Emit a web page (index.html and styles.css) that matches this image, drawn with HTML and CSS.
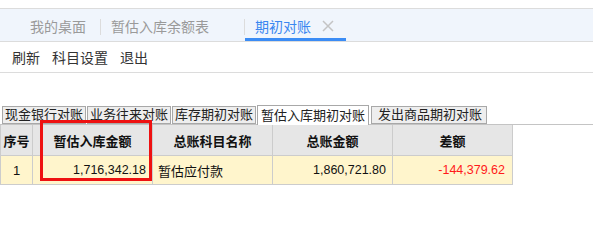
FILE: index.html
```html
<!DOCTYPE html>
<html lang="zh-CN">
<head>
<meta charset="utf-8">
<title>期初对账</title>
<link rel="stylesheet" href="styles.css">
</head>
<body>
<div class="top-space"></div>
<div class="tabbar">
  <div class="tab tab-home">我的桌面</div>
  <span class="sep"></span>
  <div class="tab">暂估入库余额表<svg class="close hidden" width="12" height="12" viewBox="0 0 12 12"><path d="M1 1L11 11M11 1L1 11"/></svg></div>
  <span class="sep"></span>
  <div class="tab active">期初对账<svg class="close" width="12" height="12" viewBox="0 0 12 12"><path d="M1 1L11 11M11 1L1 11"/></svg></div>
</div>
<div class="toolbar">
  <span class="tool">刷新</span>
  <span class="tool">科目设置</span>
  <span class="tool">退出</span>
</div>
<div class="subtabs">
  <div class="stab">现金银行对账</div>
  <div class="stab">业务往来对账</div>
  <div class="stab">库存期初对账</div>
  <div class="stab stab-active">暂估入库期初对账</div>
  <div class="stab stab-last">发出商品期初对账</div>
</div>
<div class="grid-wrap">
  <table class="grid">
    <colgroup>
      <col class="c-no">
      <col class="c-w">
      <col class="c-w">
      <col class="c-w">
      <col class="c-w">
    </colgroup>
    <thead>
      <tr>
        <th>序号</th>
        <th>暂估入库金额</th>
        <th>总账科目名称</th>
        <th>总账金额</th>
        <th>差额</th>
      </tr>
    </thead>
    <tbody>
      <tr>
        <td class="center">1</td>
        <td class="num">1,716,342.18</td>
        <td class="text">暂估应付款</td>
        <td class="num">1,860,721.80</td>
        <td class="num neg">-144,379.62</td>
      </tr>
    </tbody>
  </table>
  <div class="highlight"></div>
</div>
</body>
</html>
```

FILE: styles.css
```css
html, body {
  margin: 0;
  padding: 0;
  background: #ffffff;
}
body {
  font-family: "Liberation Sans", "Noto Sans CJK SC", sans-serif;
  color: #222;
}
.top-space {
  height: 8px;
}
.tabbar {
  display: flex;
  align-items: stretch;
  height: 32px;
  border-top: 1px solid #dcdcdc;
  border-bottom: 1px solid #dcdcdc;
  background: #f0f5fc;
  padding-left: 19px;
}
.tab {
  display: flex;
  align-items: center;
  font-size: 14px;
  line-height: 18px;
  color: #9a9a9a;
  padding: 6px 12px 0 10px;
  border-bottom: 3px solid transparent;
}
.tab-home {
  padding-left: 11px;
  padding-right: 14px;
}
.tab.active {
  color: #3b87f0;
  border-bottom-color: #3b8cf5;
}
.close {
  margin-left: 11px;
  stroke: #c4c4c4;
  stroke-width: 1.5;
  fill: none;
  margin-top: -1px;
}
.close.hidden {
  visibility: hidden;
}
.sep {
  width: 1px;
  height: 16px;
  background: #dcdcdc;
  align-self: center;
  margin-top: 4px;
}
.toolbar {
  display: flex;
  align-items: center;
  gap: 12px;
  height: 30px;
  padding-left: 12px;
  border-bottom: 1px solid #dcdcdc;
  font-size: 14px;
  color: #333;
}
.subtabs {
  display: flex;
  align-items: flex-end;
  height: 20px;
  margin-top: 31px;
  padding-left: 2px;
  border-bottom: 1px solid #c4c4c4;
}
.stab {
  font-size: 13px;
  line-height: 16px;
  padding: 0 2px;
  border: 1px solid #a8a8a8;
  background: #eeeeee;
  color: #222;
  margin-right: 1px;
  white-space: nowrap;
}
.stab-active {
  background: #ffffff;
  line-height: 19px;
  border-bottom: none;
  margin-bottom: -1px;
  padding: 0 3px;
  margin-right: 2px;
}
.stab-last {
  padding: 0 4px 0 6px;
}
.grid-wrap {
  position: relative;
}
.grid {
  border-collapse: collapse;
  table-layout: fixed;
  width: 513px;
}
.c-no {
  width: 32px;
}
.c-w {
  width: 120px;
}
.grid th,
.grid td {
  border: 1px solid #cccccc;
  font-size: 13px;
  padding: 0;
  white-space: nowrap;
  overflow: hidden;
}
.grid thead tr {
  border-top: none;
}
.grid th {
  border-top: none;
  height: 30px;
  background: #e6e6e6;
  font-weight: bold;
  color: #111;
  text-align: center;
}
.grid td {
  height: 28px;
  background: #fff5cc;
  color: #111;
}
.grid td.center {
  text-align: center;
}
.grid td.num {
  text-align: right;
  padding-right: 6px;
  font-size: 12.5px;
}
.grid td.neg {
  color: #ff1a1a;
  padding-right: 7px;
}
.grid td.text {
  text-align: left;
  padding-left: 5px;
}
.highlight {
  position: absolute;
  left: 40px;
  top: -5px;
  width: 106px;
  height: 55px;
  border: 3px solid #ee1111;
  pointer-events: none;
}
```
